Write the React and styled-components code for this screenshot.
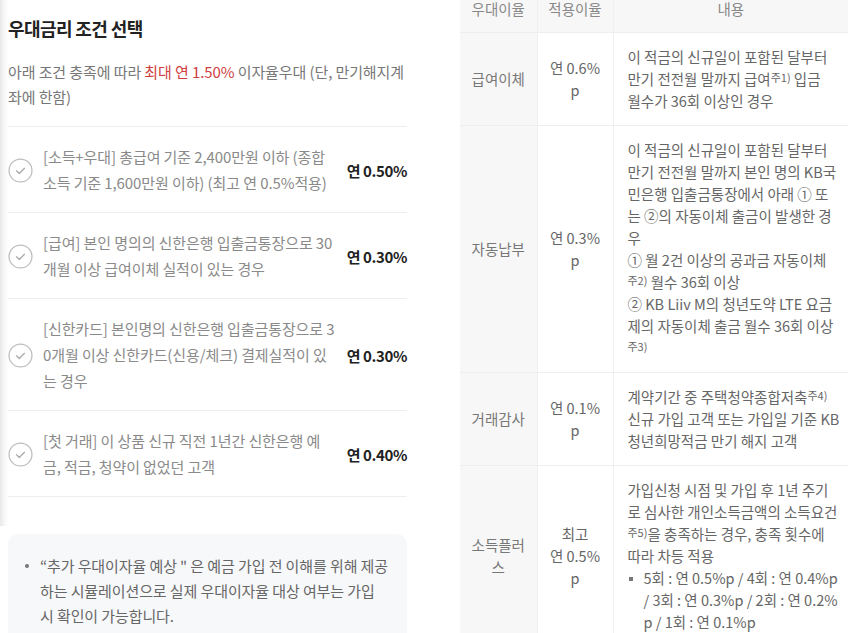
import styled, { createGlobalStyle } from 'styled-components'

const GlobalStyle = createGlobalStyle`
  html, body {
    margin: 0;
    padding: 0;
    background: #fff;
  }

  body {
    font-family: "Noto Sans CJK KR", "Noto Sans", sans-serif;
    -webkit-font-smoothing: antialiased;
  }
`

const Page = styled.div`
  display: flex;
  align-items: flex-start;
  width: 865px;
  height: 633px;
  overflow: hidden;
  background: #fff;
`

/* ---------- left: condition picker ---------- */

const LeftPanel = styled.section`
  flex: none;
  width: 407px;
`

const Upper = styled.div`
  padding: 15px 0 29px 8px;
  box-shadow: inset 9px 0 8px -8px rgba(0, 0, 0, 0.16);
`

const Title = styled.h2`
  margin: 0;
  font-size: 18px;
  line-height: 26px;
  font-weight: 700;
  color: #222;
  letter-spacing: -0.6px;
`

const Description = styled.p`
  margin: 18px 0 17px;
  font-size: 15px;
  line-height: 25px;
  color: #777;
  letter-spacing: -0.1px;
  white-space: nowrap;
`

const Highlight = styled.span`
  color: #cf3f3f;
`

const ConditionList = styled.ul`
  margin: 0;
  padding: 0;
  list-style: none;
  border-top: 1px solid #eeeeee;
`

const ConditionItem = styled.li`
  display: flex;
  align-items: center;
  gap: 10px;
  padding: 17px 0 16px;
  border-bottom: 1px solid #eeeeee;
`

const CheckIcon = styled.svg`
  flex: none;
  width: 25px;
  height: 25px;
`

const ConditionText = styled.p`
  flex: 1;
  margin: 0;
  font-size: 15px;
  line-height: 26px;
  color: #8a8a8a;
  letter-spacing: -0.1px;
  white-space: nowrap;
`

const Rate = styled.strong`
  flex: none;
  font-size: 15px;
  font-weight: 700;
  color: #222;
  letter-spacing: -0.4px;
`

const InfoBox = styled.ul`
  margin: 8px 0 0 8px;
  padding: 19px 10px 19px 17px;
  list-style: none;
  background: #f7f8fa;
  border-radius: 10px;
`

const InfoItem = styled.li`
  position: relative;
  padding-left: 15px;
  font-size: 15px;
  line-height: 25px;
  color: #666;
  letter-spacing: -0.1px;
  white-space: nowrap;

  &::before {
    content: '';
    position: absolute;
    left: 0;
    top: 11px;
    width: 4px;
    height: 4px;
    border-radius: 50%;
    background: #777;
  }
`

/* ---------- right: rate table ---------- */

const RateTable = styled.table`
  flex: none;
  width: 388px;
  margin-left: 53px;
  border-collapse: collapse;
  table-layout: fixed;
  font-size: 14.5px;
  color: #666;
`

const HeadCell = styled.th`
  padding: 0 0 14px;
  vertical-align: top;
  font-weight: 400;
  line-height: 18px;
  color: #888;
  background: #f7f7f7;
  border-left: 1px solid #efefef;

  &:first-child {
    border-left: none;
  }
`

const BodyRow = styled.tr`
  border-top: 1px solid #eeeeee;
`

const LabelCell = styled.td`
  padding: 13px 4px;
  text-align: center;
  vertical-align: middle;
  line-height: 22px;
  color: #777;
  background: #f7f7f7;
`

const ValueCell = styled.td`
  padding: 13px 4px;
  text-align: center;
  vertical-align: middle;
  line-height: 22px;
  border-left: 1px solid #efefef;
`

const ContentCell = styled.td`
  padding: 13px 4px 13px 14px;
  vertical-align: middle;
  line-height: 22px;
  white-space: nowrap;
  border-left: 1px solid #efefef;
`

const Note = styled.span`
  font-size: 11px;
  line-height: 0;
  vertical-align: 3px;
`

const Bullet = styled.div`
  position: relative;
  padding-left: 16px;

  &::before {
    content: '';
    position: absolute;
    left: 1px;
    top: 10px;
    width: 4px;
    height: 4px;
    background: #777;
  }
`

const Check = () => (
  <CheckIcon viewBox="0 0 24 24" fill="none">
    <circle cx="12" cy="12" r="11" stroke="#bdbdbd" strokeWidth="1.2" />
    <path d="M8.2 12.3l2.6 2.6 5-5" stroke="#a9a9a9" strokeWidth="1.2" strokeLinecap="round" strokeLinejoin="round" />
  </CheckIcon>
)

const conditions = [
  {
    lines: ['[소득+우대] 총급여 기준 2,400만원 이하 (종합', '소득 기준 1,600만원 이하) (최고 연 0.5%적용)'],
    rate: '연 0.50%'
  },
  {
    lines: ['[급여] 본인 명의의 신한은행 입출금통장으로 30', '개월 이상 급여이체 실적이 있는 경우'],
    rate: '연 0.30%'
  },
  {
    lines: ['[신한카드] 본인명의 신한은행 입출금통장으로 3', '0개월 이상 신한카드(신용/체크) 결제실적이 있', '는 경우'],
    rate: '연 0.30%'
  },
  {
    lines: ['[첫 거래] 이 상품 신규 직전 1년간 신한은행 예', '금, 적금, 청약이 없었던 고객'],
    rate: '연 0.40%'
  }
]

const Lines = ({ lines }) =>
  lines.map((line, i) => (
    <span key={i}>
      {i > 0 && <br />}
      {line}
    </span>
  ))

const App = () => {
  return (
    <>
      <GlobalStyle />
      <Page>
        <LeftPanel>
          <Upper>
            <Title>우대금리 조건 선택</Title>
            <Description>
              아래 조건 충족에 따라 <Highlight>최대 연 1.50%</Highlight> 이자율우대 (단, 만기해지계
              <br />
              좌에 한함)
            </Description>

            <ConditionList>
              {conditions.map((item, i) => (
                <ConditionItem key={i}>
                  <Check />
                  <ConditionText>
                    <Lines lines={item.lines} />
                  </ConditionText>
                  <Rate>{item.rate}</Rate>
                </ConditionItem>
              ))}
            </ConditionList>
          </Upper>

          <InfoBox>
            <InfoItem>
              “추가 우대이자율 예상 " 은 예금 가입 전 이해를 위해 제공
              <br />
              하는 시뮬레이션으로 실제 우대이자율 대상 여부는 가입
              <br />
              시 확인이 가능합니다.
            </InfoItem>
          </InfoBox>
        </LeftPanel>

        <RateTable>
          <colgroup>
            <col style={{ width: 77 }} />
            <col style={{ width: 76 }} />
            <col style={{ width: 235 }} />
          </colgroup>
          <thead>
            <tr>
              <HeadCell>우대이율</HeadCell>
              <HeadCell>적용이율</HeadCell>
              <HeadCell>내용</HeadCell>
            </tr>
          </thead>
          <tbody>
            <BodyRow>
              <LabelCell>급여이체</LabelCell>
              <ValueCell>연 0.6%<br />p</ValueCell>
              <ContentCell>
                이 적금의 신규일이 포함된 달부터<br />
                만기 전전월 말까지 급여<Note>주1)</Note> 입금<br />
                월수가 36회 이상인 경우
              </ContentCell>
            </BodyRow>
            <BodyRow>
              <LabelCell>자동납부</LabelCell>
              <ValueCell>연 0.3%<br />p</ValueCell>
              <ContentCell>
                이 적금의 신규일이 포함된 달부터<br />
                만기 전전월 말까지 본인 명의 KB국<br />
                민은행 입출금통장에서 아래 ① 또<br />
                는 ②의 자동이체 출금이 발생한 경<br />
                우<br />
                ① 월 2건 이상의 공과금 자동이체<br />
                <Note>주2)</Note> 월수 36회 이상<br />
                ② KB Liiv M의 청년도약 LTE 요금<br />
                제의 자동이체 출금 월수 36회 이상<br />
                <Note>주3)</Note>
              </ContentCell>
            </BodyRow>
            <BodyRow>
              <LabelCell>거래감사</LabelCell>
              <ValueCell>연 0.1%<br />p</ValueCell>
              <ContentCell>
                계약기간 중 주택청약종합저축<Note>주4)</Note><br />
                신규 가입 고객 또는 가입일 기준 KB<br />
                청년희망적금 만기 해지 고객
              </ContentCell>
            </BodyRow>
            <BodyRow>
              <LabelCell>소득플러<br />스</LabelCell>
              <ValueCell>최고<br />연 0.5%<br />p</ValueCell>
              <ContentCell>
                가입신청 시점 및 가입 후 1년 주기<br />
                로 심사한 개인소득금액의 소득요건<br />
                <Note>주5)</Note>을 충족하는 경우, 충족 횟수에<br />
                따라 차등 적용
                <Bullet>
                  5회 : 연 0.5%p / 4회 : 연 0.4%p<br />
                  / 3회 : 연 0.3%p / 2회 : 연 0.2%<br />
                  p / 1회 : 연 0.1%p
                </Bullet>
              </ContentCell>
            </BodyRow>
          </tbody>
        </RateTable>
      </Page>
    </>
  )
}

export default App
